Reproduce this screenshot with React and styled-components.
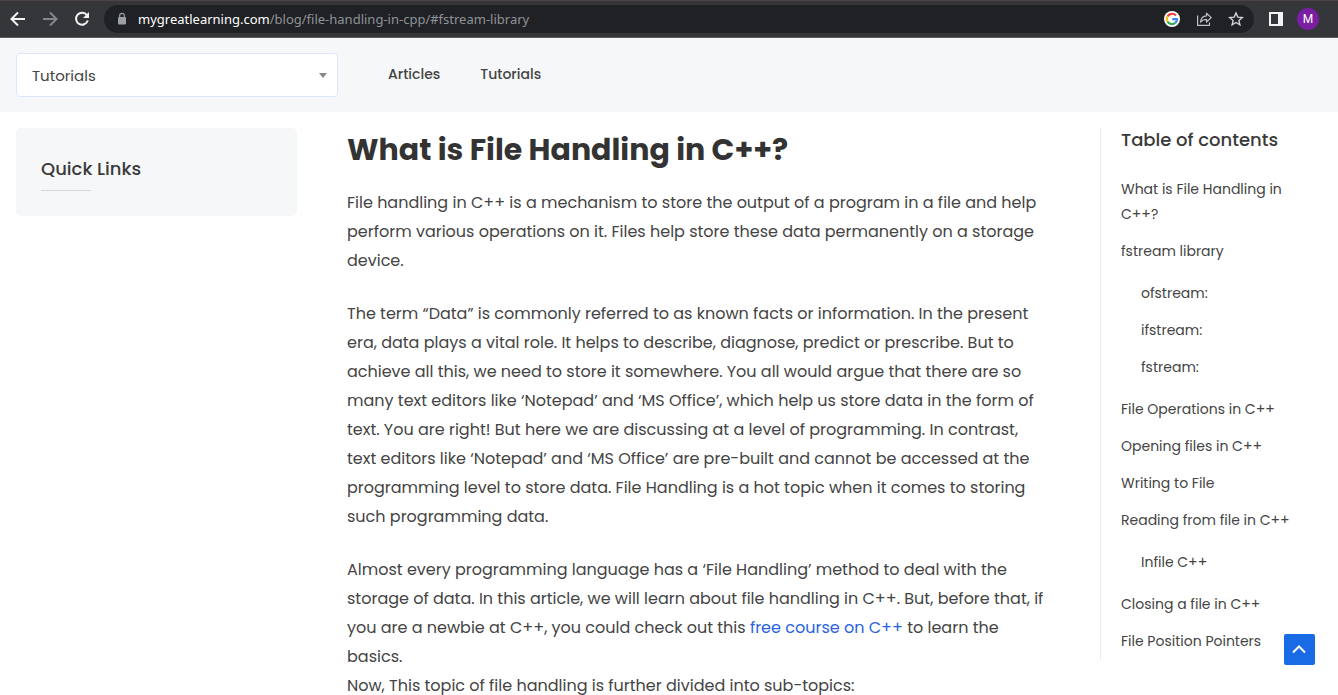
import React from "react";
import styled, { createGlobalStyle, css } from "styled-components";

const GlobalStyle = createGlobalStyle`
  *, *::before, *::after { box-sizing: border-box; }
  body {
    margin: 0;
    background: #fff;
    color: #444;
    font-family: Poppins, Inter, "Open Sans", sans-serif;
    font-size: 16px;
  }
  h1, h2, p, ul { margin: 0; padding: 0; }
  ul { list-style: none; }
  a { color: inherit; text-decoration: none; }
  button { border: 0; padding: 0; background: none; color: inherit; cursor: pointer; }
`;

const Shell = styled.div`
  display: flex;
  flex-direction: column;
  height: 100vh;
  overflow: hidden;
`;

const BrowserBar = styled.div`
  display: flex;
  flex: none;
  align-items: center;
  height: 38px;
  padding: 0 19px 0 8px;
  background: #35363a;
  border-top: 1px solid #4a4544;
  border-bottom: 1px solid #5b5c60;
`;

const IconButton = styled.button`
  display: flex;
  align-items: center;
  justify-content: center;
  width: 20px;
  height: 20px;
  margin-right: ${(p) => p.$gap || 0}px;
`;

const AddressBar = styled.div`
  display: flex;
  flex: 1;
  align-items: center;
  height: 28px;
  margin-right: 12px;
  padding: 0 8px 0 12px;
  border-radius: 14px;
  background: #202124;
`;

const AddressText = styled.div`
  flex: 1;
  margin-left: 10px;
  color: #8f9398;
  font: 13px/20px "Noto Sans", "Open Sans", sans-serif;
  white-space: nowrap;

  b { color: #fff; font-weight: 400; }
`;

const Avatar = styled.button`
  width: 22px;
  height: 22px;
  border-radius: 50%;
  background: #7b1fa2;
  color: #fff;
  font: 12px/22px Roboto, sans-serif;
`;

const Page = styled.div`
  flex: 1;
  min-height: 0;
  overflow: hidden;
`;

const SiteHeader = styled.header`
  display: flex;
  align-items: center;
  height: 74px;
  padding: 0 16px;
  background: #f5f7f9;
`;

const SelectWrap = styled.div`
  display: grid;
  align-items: center;
  width: 322px;

  > * { grid-area: 1 / 1; }
  > svg { justify-self: end; margin-right: 11px; pointer-events: none; }
`;

const Select = styled.select`
  appearance: none;
  width: 100%;
  height: 44px;
  padding: 2px 15px 0;
  border: 1px solid #dce7fc;
  border-radius: 4px;
  background: #fff;
  color: #444;
  font: 15px/24px Poppins, Inter, sans-serif;
`;

const Nav = styled.nav`
  display: flex;
  gap: 40px;
  margin-left: 50px;
  padding-bottom: 2px;
  font-size: 14px;
  font-weight: 500;
  line-height: 24px;
`;

const Columns = styled.div`
  display: grid;
  grid-template-columns: 281px minmax(0, 1fr) 222px;
  align-items: start;
  gap: 50px;
  padding: 16px;
`;

const QuickLinks = styled.aside`
  height: 88px;
  padding: 25px;
  border-radius: 5px;
  background: #f5f7f9;
`;

const PanelTitle = styled.h2`
  color: #3a3a3a;
  font-size: 18px;
  font-weight: 500;
  line-height: 24px;

  ${(p) =>
    p.$underlined &&
    css`
      line-height: 32px;
      &::after {
        content: "";
        display: block;
        width: 50px;
        margin-top: 5px;
        border-top: 1px solid #d5d7d9;
      }
    `}
`;

const Article = styled.article`
  line-height: 29px;

  a { color: #2b63e0; }
`;

const Title = styled.h1`
  margin-bottom: 16px;
  color: #333;
  font-size: 30px;
  font-weight: 700;
  line-height: 44px;
`;

const Paragraph = styled.p`
  margin-bottom: 24px;
`;

const Contents = styled.nav`
  padding-left: 20px;
  border-left: 1px solid #e9ebee;
`;

const ContentsList = styled.ul`
  margin-top: 19px;
  font-size: 14px;
  line-height: 25px;
`;

const SubList = styled.ul`
  padding: 5px 0 5px 20px;
`;

const Item = styled.li`
  padding: 6px 0;
`;

const ToTop = styled.button`
  position: fixed;
  right: 23px;
  bottom: 30px;
  display: flex;
  align-items: center;
  justify-content: center;
  width: 31px;
  height: 31px;
  border-radius: 2px;
  background: #196ae5;
`;

const sections = [
  ["What is File Handling in C++?"],
  ["fstream library", ["ofstream:", "ifstream:", "fstream:"]],
  ["File Operations in C++"],
  ["Opening files in C++"],
  ["Writing to File"],
  ["Reading from file in C++", ["Infile C++"]],
  ["Closing a file in C++"],
  ["File Position Pointers"],
];

const Arrow = ({ color, flip }) => (
  <svg width="16" height="16" viewBox="0 0 16 16" fill="none" stroke={color} strokeWidth="2">
    <path d={flip ? "M1 8h13M8 1.5 14.5 8 8 14.5" : "M15 8H2M8 1.5 1.5 8 8 14.5"} />
  </svg>
);

const Reload = () => (
  <svg width="16" height="16" viewBox="0 0 16 16">
    <path d="M13 4.3A6 6 0 1 0 13.8 9.5" fill="none" stroke="#f1f3f4" strokeWidth="2" />
    <path d="M15 1v6H9z" fill="#f1f3f4" />
  </svg>
);

const Lock = () => (
  <svg width="12" height="14" viewBox="0 0 12 14">
    <rect x="2" y="5" width="8" height="7.5" rx="1" fill="#9aa0a6" />
    <path d="M3.7 5.5V3.6a2.3 2.3 0 0 1 4.6 0v1.9" fill="none" stroke="#9aa0a6" strokeWidth="1.2" />
  </svg>
);

const Google = () => (
  <svg width="16" height="16" viewBox="0 0 16 16">
    <circle cx="8" cy="8" r="8" fill="#fff" />
    <g fill="none" strokeWidth="2.2">
      <path d="M11.9 4.5A5.1 5.1 0 0 0 3.5 5.6" stroke="#ea4335" />
      <path d="M3.5 5.6a5.1 5.1 0 0 0 0 4.8" stroke="#fbbc05" />
      <path d="M3.5 10.4a5.1 5.1 0 0 0 7.8 1.5" stroke="#34a853" />
      <path d="M11.3 11.9A5 5 0 0 0 13 8.2H8.2" stroke="#4285f4" />
    </g>
  </svg>
);

const Share = () => (
  <svg width="16" height="16" viewBox="0 0 16 16" fill="none" stroke="#bdc1c6" strokeWidth="1.2">
    <path d="M1.600 4.500v9.900h11.900v-3" />
    <path d="M4.500 11c.4-4.200 2.500-6 6-6.200V2.200l4.700 4.400-4.700 4.400V8.400C7.800 8.400 6 9.200 4.500 11z" strokeLinejoin="round" />
  </svg>
);

const Star = () => (
  <svg width="16" height="16" viewBox="0 0 16 16" fill="none" stroke="#d2d4d7" strokeWidth="1.4">
    <path d="m8 2 1.800 4.100 4.500.4-3.400 2.900 1 4.400L8 11.500l-3.900 2.300 1-4.400L1.700 6.500l4.500-.4z" />
  </svg>
);

const SidePanel = () => (
  <svg width="14" height="14" viewBox="0 0 14 14">
    <path d="M0 0h14v14H0zM2 2v10h7V2z" fill="#f1f3f4" fillRule="evenodd" />
  </svg>
);

export default function App() {
  return (
    <Shell>
      <GlobalStyle />
      <BrowserBar>
        <IconButton aria-label="Back" $gap={12}><Arrow color="#f1f3f4" /></IconButton>
        <IconButton aria-label="Forward" $gap={12}><Arrow color="#84868a" flip /></IconButton>
        <IconButton aria-label="Reload" $gap={12}><Reload /></IconButton>
        <AddressBar>
          <Lock />
          <AddressText>
            <b>mygreatlearning.com</b>/blog/file-handling-in-cpp/#fstream-library
          </AddressText>
          <IconButton aria-label="Search with Google" $gap={12}><Google /></IconButton>
          <IconButton aria-label="Share" $gap={12}><Share /></IconButton>
          <IconButton aria-label="Bookmark"><Star /></IconButton>
        </AddressBar>
        <IconButton aria-label="Side panel" $gap={11}><SidePanel /></IconButton>
        <Avatar aria-label="Profile">M</Avatar>
      </BrowserBar>

      <Page>
        <SiteHeader>
          <SelectWrap>
            <Select aria-label="Category" defaultValue="Tutorials">
              <option>Tutorials</option>
              <option>Articles</option>
            </Select>
            <svg width="8" height="5" viewBox="0 0 8 5"><path d="M0 0h8L4 5z" fill="#888" /></svg>
          </SelectWrap>
          <Nav>
            <a href="#articles">Articles</a>
            <a href="#tutorials">Tutorials</a>
          </Nav>
        </SiteHeader>

        <Columns>
          <QuickLinks>
            <PanelTitle $underlined>Quick Links</PanelTitle>
          </QuickLinks>

          <Article>
            <Title>What is File Handling in C++?</Title>
            <Paragraph>
              File handling in C++ is a mechanism to store the output of a program in a file and help
              perform various operations on it. Files help store these data permanently on a storage
              device.
            </Paragraph>
            <Paragraph>
              The term “Data” is commonly referred to as known facts or information. In the present
              era, data plays a vital role. It helps to describe, diagnose, predict or prescribe. But to
              achieve all this, we need to store it somewhere. You all would argue that there are so
              many text editors like ‘Notepad’ and ‘MS Office’, which help us store data in the form of
              text. You are right! But here we are discussing at a level of programming. In contrast,
              text editors like ‘Notepad’ and ‘MS Office’ are pre-built and cannot be accessed at the
              programming level to store data. File Handling is a hot topic when it comes to storing
              such programming data.
            </Paragraph>
            <Paragraph>
              Almost every programming language has a ‘File Handling’ method to deal with the
              storage of data. In this article, we will learn about file handling in C++. But, before that, if
              you are a newbie at C++, you could check out this <a href="#course">free course on C++</a> to learn the
              basics.
              <br />
              Now, This topic of file handling is further divided into sub-topics:
            </Paragraph>
          </Article>

          <Contents aria-label="Table of contents">
            <PanelTitle>Table of contents</PanelTitle>
            <ContentsList>
              {sections.map(([label, children]) => (
                <React.Fragment key={label}>
                  <Item><a href="#section">{label}</a></Item>
                  {children && (
                    <li>
                      <SubList>
                        {children.map((c) => (
                          <Item key={c}><a href="#section">{c}</a></Item>
                        ))}
                      </SubList>
                    </li>
                  )}
                </React.Fragment>
              ))}
            </ContentsList>
          </Contents>
        </Columns>
      </Page>

      <ToTop aria-label="Back to top">
        <svg width="15" height="9" viewBox="0 0 15 9" fill="none" stroke="#fff" strokeWidth="2">
          <path d="M1 7.500 7 1.500l6 6" />
        </svg>
      </ToTop>
    </Shell>
  );
}
